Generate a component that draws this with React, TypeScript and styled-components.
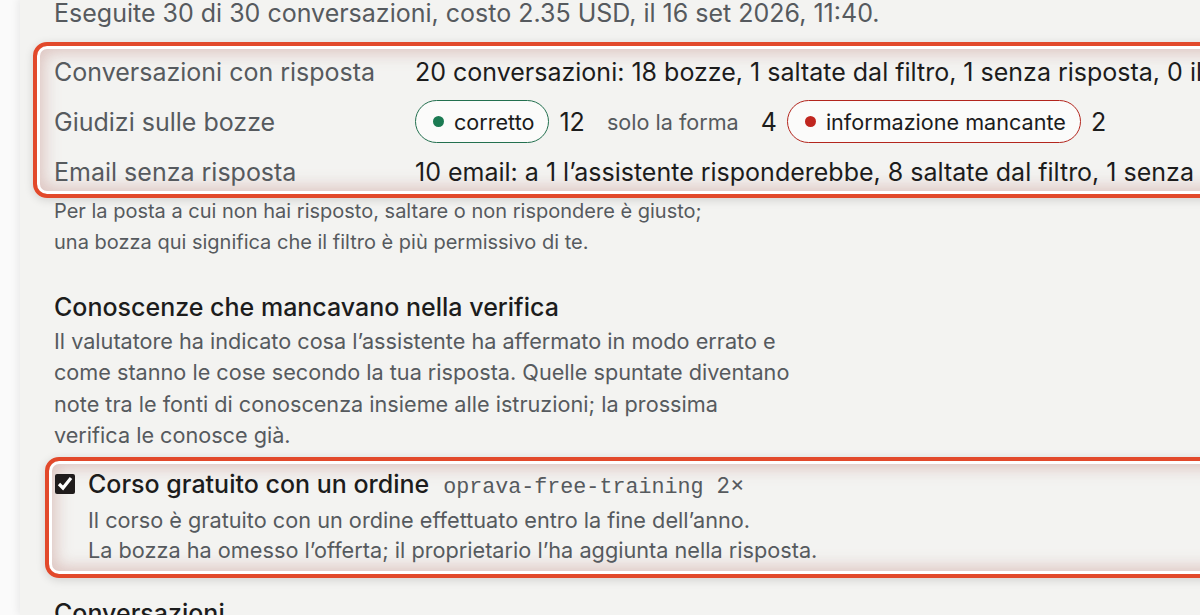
import * as React from 'react';
import styled, { createGlobalStyle } from 'styled-components';

const colors = {
  page: '#f3f3f1',
  gutter: '#fafafa',
  ink: '#1c1c1c',
  muted: '#565a5e',
  mark: '#e2492b',
  good: '#23704f',
  bad: '#b3261e'
};

const GlobalStyle = createGlobalStyle`
  html, body {
    margin: 0;
    padding: 0;
    background: ${colors.gutter};
    overflow: hidden;
  }
  body {
    font-family: Inter, "Noto Sans", sans-serif;
    color: ${colors.ink};
  }
`;

const Shell = styled.div`
  display: flex;
  width: 1200px;
  height: 615px;
  overflow: hidden;
`;

const Gutter = styled.div`
  flex: 0 0 20px;
  background: ${colors.gutter};
`;

const Main = styled.main`
  flex: 0 0 1500px;
  background: ${colors.page};
  box-shadow: -2px 0 8px rgba(0, 0, 0, 0.07);
  padding: 0 0 0 34px;
  margin-top: -2px;
`;

const Summary = styled.p`
  margin: 0 0 13px;
  font-size: 25px;
  line-height: 31px;
  color: ${colors.muted};
`;

const Highlight = styled.div<{ $inset: number }>`
  margin-left: -${p => p.$inset + 7}px;
  padding-left: ${p => p.$inset + 3}px;
  border: 4px solid ${colors.mark};
  border-radius: 14px;
  box-shadow:
    inset 0 0 0 3px #fff,
    inset 0 0 16px 7px rgba(196, 140, 132, 0.45),
    0 2px 10px rgba(0, 0, 0, 0.14);
`;

const StatsTable = styled.div`
  display: grid;
  grid-template-columns: 361px 1fr;
  grid-auto-rows: 45px;
  row-gap: 5px;
  align-items: center;
  padding: 3px 0 0;
  font-size: 25px;
`;

const Label = styled.div`
  color: ${colors.muted};
  white-space: nowrap;
`;

const Value = styled.div`
  display: flex;
  align-items: center;
  gap: 10px;
  color: ${colors.ink};
  white-space: nowrap;
`;

type Tone = 'good' | 'plain' | 'bad';

const Pill = styled.span<{ $tone: Tone }>`
  display: inline-flex;
  align-items: center;
  gap: 10px;
  height: 43px;
  box-sizing: border-box;
  padding: 0 ${p => (p.$tone === 'plain' ? 11 : 14)}px 0 ${p => (p.$tone === 'plain' ? 11 : 17)}px;
  border-radius: 999px;
  border: 1.5px solid
    ${p => (p.$tone === 'good' ? colors.good : p.$tone === 'bad' ? colors.bad : 'transparent')};
  background: ${p => (p.$tone === 'plain' ? 'transparent' : '#fbfbfa')};
  color: ${p => (p.$tone === 'plain' ? colors.muted : colors.ink)};
  font-size: 21.6px;
`;

const Dot = styled.span<{ $tone: Tone }>`
  width: 11px;
  height: 11px;
  border-radius: 50%;
  background: ${p => (p.$tone === 'good' ? '#1b7a52' : '#c0261f')};
`;

const Note = styled.p`
  margin: -2px 0 0;
  font-size: 20px;
  line-height: 31px;
  color: ${colors.muted};
`;

const Heading = styled.h2`
  margin: 32px 0 0;
  font-size: 25px;
  line-height: 34px;
  font-weight: 500;
  color: ${colors.ink};
`;

const Lead = styled.p`
  margin: 2px 0 6px;
  font-size: 21.65px;
  line-height: 31.3px;
  color: ${colors.muted};
`;

const FactCard = styled.div`
  display: grid;
  grid-template-columns: 34px 1fr;
  padding: 6px 0 9px;
`;

const Check = styled.input`
  width: 20px;
  height: 20px;
  margin: 7px 0 0 1px;
  accent-color: #201c1c;
`;

const FactTitle = styled.div`
  display: flex;
  align-items: baseline;
  gap: 14px;
  font-size: 25px;
  line-height: 34px;
  font-weight: 500;
  color: ${colors.ink};
`;

const Slug = styled.code`
  font-family: "Liberation Mono", "DejaVu Sans Mono", monospace;
  font-size: 21.7px;
  font-weight: 400;
  color: ${colors.muted};
`;

const Count = styled.span`
  margin-left: -1px;
  font-size: 22px;
  font-weight: 400;
  color: ${colors.muted};
`;

const FactBody = styled.p`
  grid-column: 2;
  margin: 0;
  font-size: 21.7px;
  line-height: 30px;
  color: ${colors.muted};
`;

const NextHeading = styled(Heading)`
  margin-top: 18px;
`;

const App = () => (
  <>
    <GlobalStyle />
    <Shell>
      <Gutter />
      <Main>
        <Summary>Eseguite 30 di 30 conversazioni, costo 2.35 USD, il 16 set 2026, 11:40.</Summary>

        <Highlight $inset={14}>
          <StatsTable>
            <Label>Conversazioni con risposta</Label>
            <Value>20 conversazioni: 18 bozze, 1 saltate dal filtro, 1 senza risposta, 0 il filtro non è riuscito</Value>

            <Label>Giudizi sulle bozze</Label>
            <Value>
              <Pill $tone="good"><Dot $tone="good" />corretto</Pill>
              12
              <Pill $tone="plain">solo la forma</Pill>
              4
              <Pill $tone="bad"><Dot $tone="bad" />informazione mancante</Pill>
              2
            </Value>

            <Label>Email senza risposta</Label>
            <Value>10 email: a 1 l’assistente risponderebbe, 8 saltate dal filtro, 1 senza risposta</Value>
          </StatsTable>
        </Highlight>

        <Note>
          Per la posta a cui non hai risposto, saltare o non rispondere è giusto;
          <br />
          una bozza qui significa che il filtro è più permissivo di te.
        </Note>

        <Heading>Conoscenze che mancavano nella verifica</Heading>
        <Lead>
          Il valutatore ha indicato cosa l’assistente ha affermato in modo errato e
          <br />
          come stanno le cose secondo la tua risposta. Quelle spuntate diventano
          <br />
          note tra le fonti di conoscenza insieme alle istruzioni; la prossima
          <br />
          verifica le conosce già.
        </Lead>

        <Highlight $inset={2}>
          <FactCard>
            <Check type="checkbox" checked readOnly />
            <FactTitle>
              Corso gratuito con un ordine
              <Slug>oprava-free-training</Slug>
              <Count>2×</Count>
            </FactTitle>
            <FactBody>
              Il corso è gratuito con un ordine effettuato entro la fine dell’anno.
              <br />
              La bozza ha omesso l’offerta; il proprietario l’ha aggiunta nella risposta.
            </FactBody>
          </FactCard>
        </Highlight>

        <NextHeading>Conversazioni</NextHeading>
      </Main>
    </Shell>
  </>
);

export default App;
